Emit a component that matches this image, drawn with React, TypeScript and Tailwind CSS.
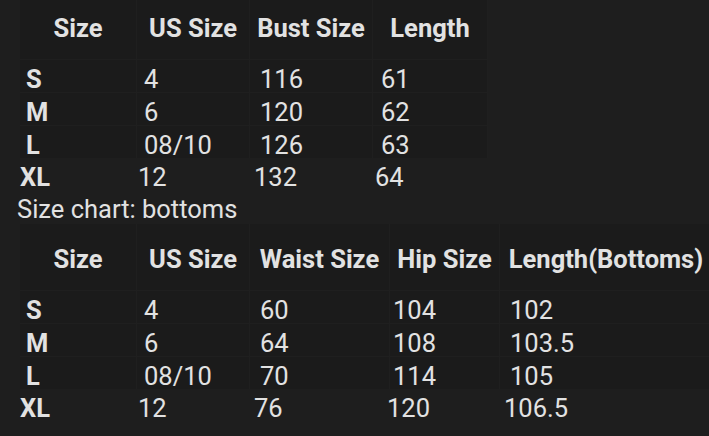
import React from "react";

const topCols = ["w-[117px]", "w-[113px]", "w-[123px]", "w-[115px]"];
const topPad = ["pl-[6px]", "pl-[7px]", "pl-[10px]", "pl-[8px]"];
const botCols = ["w-[117px]", "w-[113px]", "w-[140px]", "w-[110px]", "w-[213px]"];
const botPad = ["pl-[6px]", "pl-[7px]", "pl-[10px]", "pl-[3px]", "pl-[10px]"];

function HeaderRow({ cols, labels, cls }: { cols: string[]; labels: string[]; cls: string }) {
  return (
    <div className="flex">
      {labels.map((l, i) => (
        <div key={i} className={`${cols[i]} ${cls} shrink-0 bg-[#1b1b1b] text-center font-bold whitespace-nowrap leading-[33px] border-r border-[#1f1f1f]`}>
          {l}
        </div>
      ))}
    </div>
  );
}

function DataRow({ cols, pads, values, filled }: { cols: string[]; pads: string[]; values: string[]; filled: boolean }) {
  return (
    <div className="flex">
      {values.map((v, i) => (
        <div
          key={i}
          className={`${cols[i]} ${pads[i]} shrink-0 h-[33px] pt-[3px] leading-[33px] whitespace-nowrap ${filled ? "bg-[#1b1b1b] border-r border-t border-[#1f1f1f]" : ""} ${i === 0 ? "font-bold" : ""}`}
        >
          {v}
        </div>
      ))}
    </div>
  );
}

export default function App() {
  const top = [
    ["S", "4", "116", "61"],
    ["M", "6", "120", "62"],
    ["L", "08/10", "126", "63"],
  ];
  const bottom = [
    ["S", "4", "60", "104", "102"],
    ["M", "6", "64", "108", "103.5"],
    ["L", "08/10", "70", "114", "105"],
  ];
  return (
    <div
      className="w-[709px] h-[436px] overflow-hidden bg-[#1e1e1e] text-[#e2e2e2] text-[25.5px]"
      style={{ fontFamily: "Roboto, 'Noto Sans', sans-serif" }}
    >
      <div className="ml-[20px]">
        <HeaderRow cols={topCols} labels={["Size", "US Size", "Bust Size", "Length"]} cls="h-[59px] pt-[12px]" />
        {top.map((r, i) => (
          <DataRow key={i} cols={topCols} pads={topPad} values={r} filled />
        ))}
      </div>
      <div className="ml-[14px]">
        <DataRow cols={topCols} pads={topPad} values={["XL", "12", "132", "64"]} filled={false} />
      </div>
      <div className="ml-[17px] h-[33px] pt-[2px] leading-[33px]">Size chart: bottoms</div>
      <div className="ml-[20px]">
        <HeaderRow cols={botCols} labels={["Size", "US Size", "Waist Size", "Hip Size", "Length(Bottoms)"]} cls="h-[66px] pt-[19px]" />
        {bottom.map((r, i) => (
          <DataRow key={i} cols={botCols} pads={botPad} values={r} filled />
        ))}
      </div>
      <div className="ml-[14px]">
        <DataRow cols={botCols} pads={botPad} values={["XL", "12", "76", "120", "106.5"]} filled={false} />
      </div>
    </div>
  );
}
